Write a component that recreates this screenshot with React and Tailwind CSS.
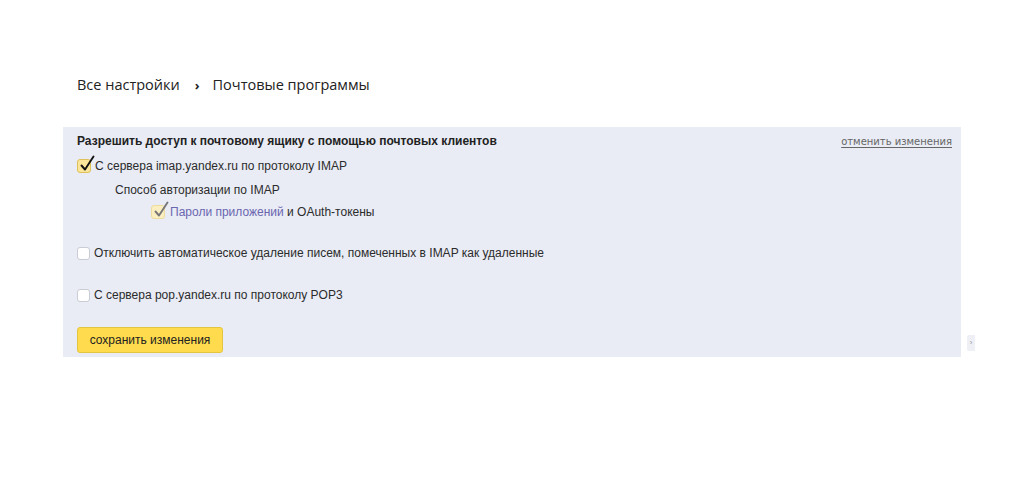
import React from "react";

const arial = { fontFamily: '"Liberation Sans", Arial, sans-serif' };

function Tick({ muted }) {
  return (
    <svg
      viewBox="0 0 16 18"
      className="pointer-events-none absolute -top-[5px] left-[1px] h-[18px] w-[16px]"
    >
      <path
        d="M2.5 10.5 L6 14.5 L14.5 1.5"
        fill="none"
        stroke={muted ? "#777" : "#111"}
        strokeWidth="1.9"
        strokeLinecap="round"
        strokeLinejoin="round"
      />
    </svg>
  );
}

function Box({ checked, muted }) {
  if (checked) {
    return (
      <span
        className={[
          "relative inline-block h-[14px] w-[14px] shrink-0 rounded-[3px] border",
          muted ? "border-[#eedc9c] bg-[#fbefc2]" : "border-[#dfc15a] bg-[#fbe59a]",
        ].join(" ")}
      >
        <Tick muted={muted} />
      </span>
    );
  }
  return (
    <span className="inline-block h-[13px] w-[13px] shrink-0 rounded-[3px] border border-[#c9ccd4] bg-white" />
  );
}

export default function App() {
  return (
    <div className="h-[497px] w-[1024px] bg-white" style={arial}>
      <div className="pl-[77px] pt-[75px]">
        <div
          className="flex h-[20px] items-center text-[14.5px] leading-[20px] text-[#222]"
          style={{ fontFamily: '"Open Sans", "Noto Sans", sans-serif' }}
        >
          <span>Все настройки</span>
          <span className="ml-[15px] mr-[13px] text-[13px] font-bold">›</span>
          <span>Почтовые программы</span>
        </div>
      </div>

      <div className="relative ml-[63px] mt-[32px] w-[898px] bg-[#e9ecf5] pb-[4px] pl-[14px] pt-[7px] text-[12px] leading-[14px] text-[#2b2b2b]">
        <div className="flex items-start justify-between pr-[9px]">
          <div className="text-[12px] font-bold text-[#222]">
            Разрешить доступ к почтовому ящику с помощью почтовых клиентов
          </div>
          <a
            className="mt-[1px] text-[10px] text-[#666] underline underline-offset-2"
            style={{ fontFamily: '"DejaVu Sans", Verdana, sans-serif' }}
          >
            отменить изменения
          </a>
        </div>

        <label className="mt-[10px] flex h-[14px] items-center gap-[4px]">
          <Box checked />
          <span>С сервера imap.yandex.ru по протоколу IMAP</span>
        </label>

        <div className="mt-[10px] pl-[38px]">Способ авторизации по IMAP</div>

        <label className="mt-[8px] flex h-[14px] items-center gap-[5px] pl-[74px]">
          <Box checked muted />
          <span>
            <span className="text-[#6a66b0]">Пароли приложений</span> и OAuth-токены
          </span>
        </label>

        <label className="mt-[27px] flex h-[14px] items-center gap-[4px]">
          <Box />
          <span>Отключить автоматическое удаление писем, помеченных в IMAP как удаленные</span>
        </label>

        <label className="mt-[28px] flex h-[14px] items-center gap-[4px]">
          <Box />
          <span>С сервера pop.yandex.ru по протоколу POP3</span>
        </label>

        <button
          type="button"
          className="mt-[25px] block h-[26px] w-[146px] rounded-[3px] border border-[#e4c53f] bg-[#ffdb4d] text-[12px] text-[#222]"
        >
          сохранить изменения
        </button>

        <div className="absolute -right-[14px] bottom-[6px] flex h-[16px] w-[8px] items-center justify-center rounded-l-[2px] bg-[#eef0f6] text-[8px] text-[#999]">
          ›
        </div>
      </div>
    </div>
  );
}
